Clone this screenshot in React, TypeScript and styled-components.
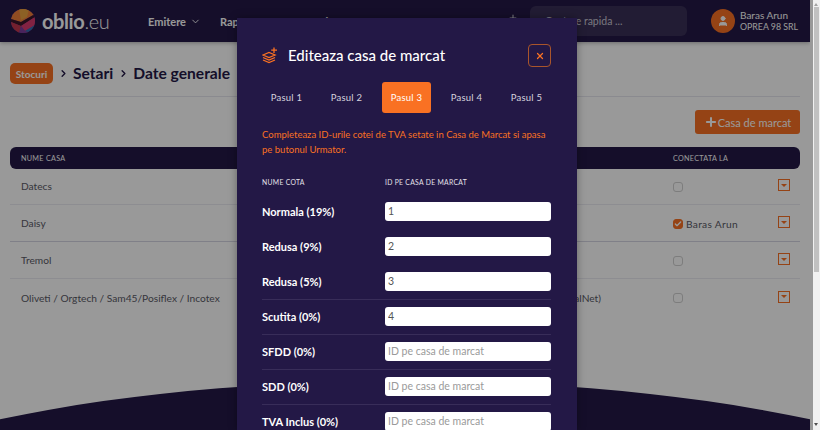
import { createGlobalStyle, styled } from 'styled-components';
import { ChevronDown, ChevronRight, Plus, User, X, Check } from 'lucide-react';

const GlobalStyle = createGlobalStyle`
  html, body {
    margin: 0;
    padding: 0;
    overflow: hidden;
  }
  * {
    box-sizing: border-box;
  }
  body {
    font-family: 'Lato', 'Open Sans', sans-serif;
  }
`;

const Screen = styled.div`
  position: relative;
  width: 820px;
  height: 430px;
  overflow: hidden;
  display: flex;
  background: #fff;
`;

const Page = styled.div`
  position: relative;
  width: 813px;
  height: 430px;
  background: #fff;
`;

const Canvas = styled.div`
  position: relative;
  width: 810px;
  height: 430px;
  overflow: hidden;
`;

const Curve = styled.div`
  position: absolute;
  left: -235px;
  top: 381px;
  width: 1280px;
  height: 340px;
  border-radius: 50%;
  background: #231846;
`;

const Backdrop = styled.div`
  position: absolute;
  inset: 0;
  background: rgba(0, 0, 0, 0.4);
`;

const Header = styled.header`
  position: relative;
  height: 42px;
  background: #231846;
  display: flex;
  align-items: center;
  padding: 0 0 0 11px;
  box-shadow: 0 1px 4px rgba(0, 0, 0, 0.3);
`;

const Brand = styled.div`
  display: flex;
  align-items: center;
  gap: 7px;
  width: 137px;
  color: #fff;
  font-size: 20px;
  font-weight: 700;
  letter-spacing: -0.4px;

  span {
    font-weight: 300;
  }
`;

const Nav = styled.nav`
  display: flex;
  align-items: center;
  width: 370px;
  color: #fff;
`;

const NavItem = styled.div<{ $width: number }>`
  display: flex;
  align-items: center;
  gap: 4px;
  width: ${(p) => p.$width}px;
  font-size: 11px;
  font-weight: 700;
`;

const NavAction = styled.span`
  display: flex;
  margin-bottom: 6px;
`;

const SearchBox = styled.div`
  display: flex;
  align-items: center;
  width: 157px;
  height: 30px;
  margin-left: 12px;
  padding-left: 15px;
  border-radius: 6px;
  background: #3a3057;
  color: #c9c6d3;
  font-size: 10.5px;
`;

const Avatar = styled.div`
  display: flex;
  align-items: center;
  justify-content: center;
  width: 24px;
  height: 24px;
  margin-left: 24px;
  border-radius: 50%;
  background: #f97123;
  color: #fff;
`;

const UserInfo = styled.div`
  margin-left: 5px;
  color: #fff;
`;

const UserName = styled.div`
  font-size: 10px;
  line-height: 12px;
`;

const UserCompany = styled.div`
  font-size: 8.8px;
  line-height: 12px;
`;

const Content = styled.main`
  position: relative;
  padding: 21px 10px 0;
`;

const Breadcrumb = styled.div`
  display: flex;
  align-items: flex-start;
  height: 34px;
  border-bottom: 1px solid #e6e6ee;
  color: #231846;
  font-size: 15.6px;
  font-weight: 700;
`;

const Badge = styled.div`
  display: flex;
  align-items: center;
  justify-content: center;
  width: 43px;
  height: 21px;
  border-radius: 5px;
  background: #f97123;
  color: #fff;
  font-size: 10px;
  font-weight: 700;
`;

const Crumb = styled.span`
  display: flex;
  align-items: center;
  gap: 4px;
  height: 20px;
  margin-left: 5px;
`;

const Actions = styled.div`
  display: flex;
  justify-content: flex-end;
  margin-top: 13px;
`;

const AddButton = styled.div`
  display: flex;
  align-items: center;
  justify-content: center;
  width: 105px;
  height: 24px;
  border-radius: 3px;
  background: #f97123;
  color: #fff;
  font-size: 11px;
`;

const Columns = `
  display: grid;
  grid-template-columns: 1fr 100px 105px 22px;
  align-items: center;
`;

const TableHead = styled.div`
  ${Columns}
  height: 22px;
  margin-top: 13px;
  margin-bottom: -1px;
  padding-left: 11px;
  border-radius: 6px;
  background: #231846;
  color: #fff;
  font-size: 7.2px;
  letter-spacing: 0.3px;
`;

const Row = styled.div<{ $strong?: boolean }>`
  ${Columns}
  height: 37px;
  padding-left: 11px;
  border-bottom: 1px solid ${(p) => (p.$strong ? '#d5d5e3' : '#ececf2')};
  color: #5a5a66;
  font-size: 10.2px;

  &:last-child {
    border-bottom: 0;
  }
`;

const Driver = styled.span`
  display: flex;
  justify-content: flex-end;
  padding-right: 72px;
  white-space: nowrap;
`;

const Connected = styled.div`
  display: flex;
  align-items: center;
  gap: 3px;
  padding-top: 1px;
  letter-spacing: 0.3px;
`;

const Checkbox = styled.span<{ $on?: boolean }>`
  display: inline-flex;
  align-items: center;
  justify-content: center;
  width: 10px;
  height: 10px;
  border-radius: 3px;
  border: 1px solid ${(p) => (p.$on ? '#f97123' : '#d0d0d0')};
  background: ${(p) => (p.$on ? '#f97123' : 'transparent')};
  color: #fff;
`;

const RowMenu = styled.span`
  display: flex;
  align-items: center;
  justify-content: center;
  width: 12px;
  height: 12px;
  margin-bottom: 2px;
  border: 1.5px solid #f97123;

  &::after {
    content: '';
    border-left: 3px solid transparent;
    border-right: 3px solid transparent;
    border-top: 3px solid #f97123;
  }
`;

const Modal = styled.section`
  position: absolute;
  left: 237px;
  top: 18px;
  width: 340px;
  height: 412px;
  overflow: hidden;
  padding: 26px 26px 0 25px;
  background: #231846;
  box-shadow: 0 0 8px rgba(0, 0, 0, 0.35);
  color: #fff;
`;

const ModalHead = styled.div`
  display: flex;
  align-items: center;
  height: 23px;
`;

const ModalTitle = styled.h2`
  flex: 1;
  margin: 0 0 1px 10px;
  font-size: 15px;
  font-weight: 500;
`;

const CloseButton = styled.div`
  display: flex;
  align-items: center;
  justify-content: center;
  width: 23px;
  height: 23px;
  border: 1px solid #a9552b;
  border-radius: 4px;
  color: #f97123;
`;

const Tabs = styled.div`
  display: flex;
  gap: 11px;
  margin-top: 15px;
`;

const Tab = styled.div<{ $active?: boolean }>`
  display: flex;
  align-items: center;
  justify-content: center;
  width: 49px;
  height: 31px;
  border-radius: 3px;
  background: ${(p) => (p.$active ? '#f97123' : 'transparent')};
  color: ${(p) => (p.$active ? '#fff' : '#d6d3de')};
  font-size: 9.5px;
  letter-spacing: 0.25px;
`;

const Message = styled.p`
  margin: 14px 0 0;
  color: #f97123;
  font-size: 9.5px;
  line-height: 15px;
`;

const RateGrid = styled.div`
  display: grid;
  grid-template-columns: 123px 166px;
  align-items: center;
  height: 35px;
`;

const RateHead = styled(RateGrid)`
  height: 14px;
  margin-top: 18px;
  margin-bottom: 6px;
  color: #e4e2ea;
  font-size: 6.8px;
  letter-spacing: 0.3px;
`;

const RateRow = styled(RateGrid)<{ $divided?: boolean }>`
  padding-bottom: 2px;
  border-bottom: 1px solid ${(p) => (p.$divided ? '#382d59' : 'transparent')};
  font-size: 11px;
  font-weight: 700;
`;

const RateInput = styled.input`
  width: 166px;
  height: 19px;
  padding: 0 3px;
  border: 0;
  border-radius: 3px;
  background: #fff;
  color: #555;
  font-family: inherit;
  font-size: 10.5px;
  outline: none;

  &::placeholder {
    color: #9a9a9a;
    opacity: 1;
  }
`;

const Scrollbar = styled.div`
  position: relative;
  flex: 1;
  background: #f1f1f1;
`;

const ScrollThumb = styled.div`
  width: 5px;
  height: 265px;
  margin: 7px 0 0 1px;
  background: #c1c1c1;
`;

const ScrollArrow = styled.span<{ $down?: boolean }>`
  position: absolute;
  left: 1px;
  ${(p) => (p.$down ? 'bottom: 4px;' : 'top: 3px;')}
  border-left: 2.5px solid transparent;
  border-right: 2.5px solid transparent;
  ${(p) => (p.$down ? 'border-top: 3px solid #505050;' : 'border-bottom: 3px solid #a3a3a3;')}
`;

const Logo = () => (
  <svg width="24" height="24" viewBox="0 0 24 24">
    <defs>
      <clipPath id="logo-disc">
        <circle cx="12" cy="12" r="12" />
      </clipPath>
    </defs>
    <g clipPath="url(#logo-disc)">
      <rect width="24" height="24" fill="#8c3a8c" />
      <polygon points="0,0 24,0 24,5 10,13 0,10" fill="#ef7f3a" />
      <polygon points="8,0 18,0 16,8 10,11" fill="#e9a23f" />
      <polygon points="0,10 10,13 24,5 24,8 10,17 0,13" fill="#3a1628" />
      <polygon points="0,13 10,17 8,24 0,24" fill="#c0364e" />
      <polygon points="10,17 24,8 24,16 14,22" fill="#d9396f" />
      <polygon points="8,24 10,17 14,22 20,24" fill="#7a3c9c" />
      <polygon points="14,22 24,16 24,24 20,24" fill="#2f6fb0" />
    </g>
  </svg>
);

const CashRegisterIcon = () => (
  <svg width="16" height="17" viewBox="0 0 16 17" fill="none" stroke="#f97123" strokeWidth="1.3">
    <path d="M1 8 L7 5.5 L13 8 L7 10.5 Z" />
    <path d="M1 10.5 L7 13 L13 10.5" />
    <path d="M1 13 L7 15.5 L13 13" />
    <path d="M12 0.5 V6 M9.2 3.2 H15" />
  </svg>
);

const rates = [
  { name: 'Normala (19%)', value: '1' },
  { name: 'Redusa (9%)', value: '2' },
  { name: 'Redusa (5%)', value: '3', divided: true },
  { name: 'Scutita (0%)', value: '4', divided: true },
  { name: 'SFDD (0%)', value: '', divided: true },
  { name: 'SDD (0%)', value: '', divided: true },
  { name: 'TVA Inclus (0%)', value: '' },
];

const steps = ['Pasul 1', 'Pasul 2', 'Pasul 3', 'Pasul 4', 'Pasul 5'];

const App = () => {
  return (
    <Screen>
      <GlobalStyle />
      <Page>
        <Canvas>
          <Curve />
          <Header>
            <Brand>
              <Logo />
              <div>
                oblio<span>.eu</span>
              </div>
            </Brand>
            <Nav>
              <NavItem $width={72}>
                Emitere <ChevronDown size={11} />
              </NavItem>
              <NavItem $width={80}>
                Rapoarte <ChevronDown size={11} />
              </NavItem>
              <NavItem $width={208}>Setari</NavItem>
              <NavAction>
                <Plus size={10} />
              </NavAction>
            </Nav>
            <SearchBox>Cautare rapida ...</SearchBox>
            <Avatar>
              <User size={12} fill="#fff" />
            </Avatar>
            <UserInfo>
              <UserName>Baras Arun</UserName>
              <UserCompany>OPREA 98 SRL</UserCompany>
            </UserInfo>
          </Header>
          <Content>
            <Breadcrumb>
              <Badge>Stocuri</Badge>
              <Crumb>
                <ChevronRight size={11} strokeWidth={3} /> Setari
              </Crumb>
              <Crumb>
                <ChevronRight size={11} strokeWidth={3} /> Date generale
              </Crumb>
            </Breadcrumb>
            <Actions>
              <AddButton>
                <Plus size={14} strokeWidth={3.5} /> Casa de marcat
              </AddButton>
            </Actions>
            <TableHead>
              <span>NUME CASA</span>
              <span />
              <span>CONECTATA LA</span>
              <span />
            </TableHead>
            <Row>
              <span>Datecs</span>
              <span />
              <Connected>
                <Checkbox />
              </Connected>
              <RowMenu />
            </Row>
            <Row $strong>
              <span>Daisy</span>
              <span />
              <Connected>
                <Checkbox $on>
                  <Check size={8} strokeWidth={4} />
                </Checkbox>
                Baras Arun
              </Connected>
              <RowMenu />
            </Row>
            <Row>
              <span>Tremol</span>
              <span />
              <Connected>
                <Checkbox />
              </Connected>
              <RowMenu />
            </Row>
            <Row>
              <span>Oliveti / Orgtech / Sam45/Posiflex / Incotex</span>
              <Driver>SerialNet)</Driver>
              <Connected>
                <Checkbox />
              </Connected>
              <RowMenu />
            </Row>
          </Content>
        </Canvas>
        <Backdrop />
        <Modal>
          <ModalHead>
            <CashRegisterIcon />
            <ModalTitle>Editeaza casa de marcat</ModalTitle>
            <CloseButton>
              <X size={10} strokeWidth={3} />
            </CloseButton>
          </ModalHead>
          <Tabs>
            {steps.map((step) => (
              <Tab key={step} $active={step === 'Pasul 3'}>
                {step}
              </Tab>
            ))}
          </Tabs>
          <Message>
            Completeaza ID-urile cotei de TVA setate in Casa de Marcat si apasa pe butonul Urmator.
          </Message>
          <RateHead>
            <span>NUME COTA</span>
            <span>ID PE CASA DE MARCAT</span>
          </RateHead>
          {rates.map((rate) => (
            <RateRow key={rate.name} $divided={rate.divided}>
              <span>{rate.name}</span>
              <RateInput readOnly value={rate.value} placeholder="ID pe casa de marcat" />
            </RateRow>
          ))}
        </Modal>
      </Page>
      <Scrollbar>
        <ScrollThumb />
        <ScrollArrow />
        <ScrollArrow $down />
      </Scrollbar>
    </Screen>
  );
};

export default App;
